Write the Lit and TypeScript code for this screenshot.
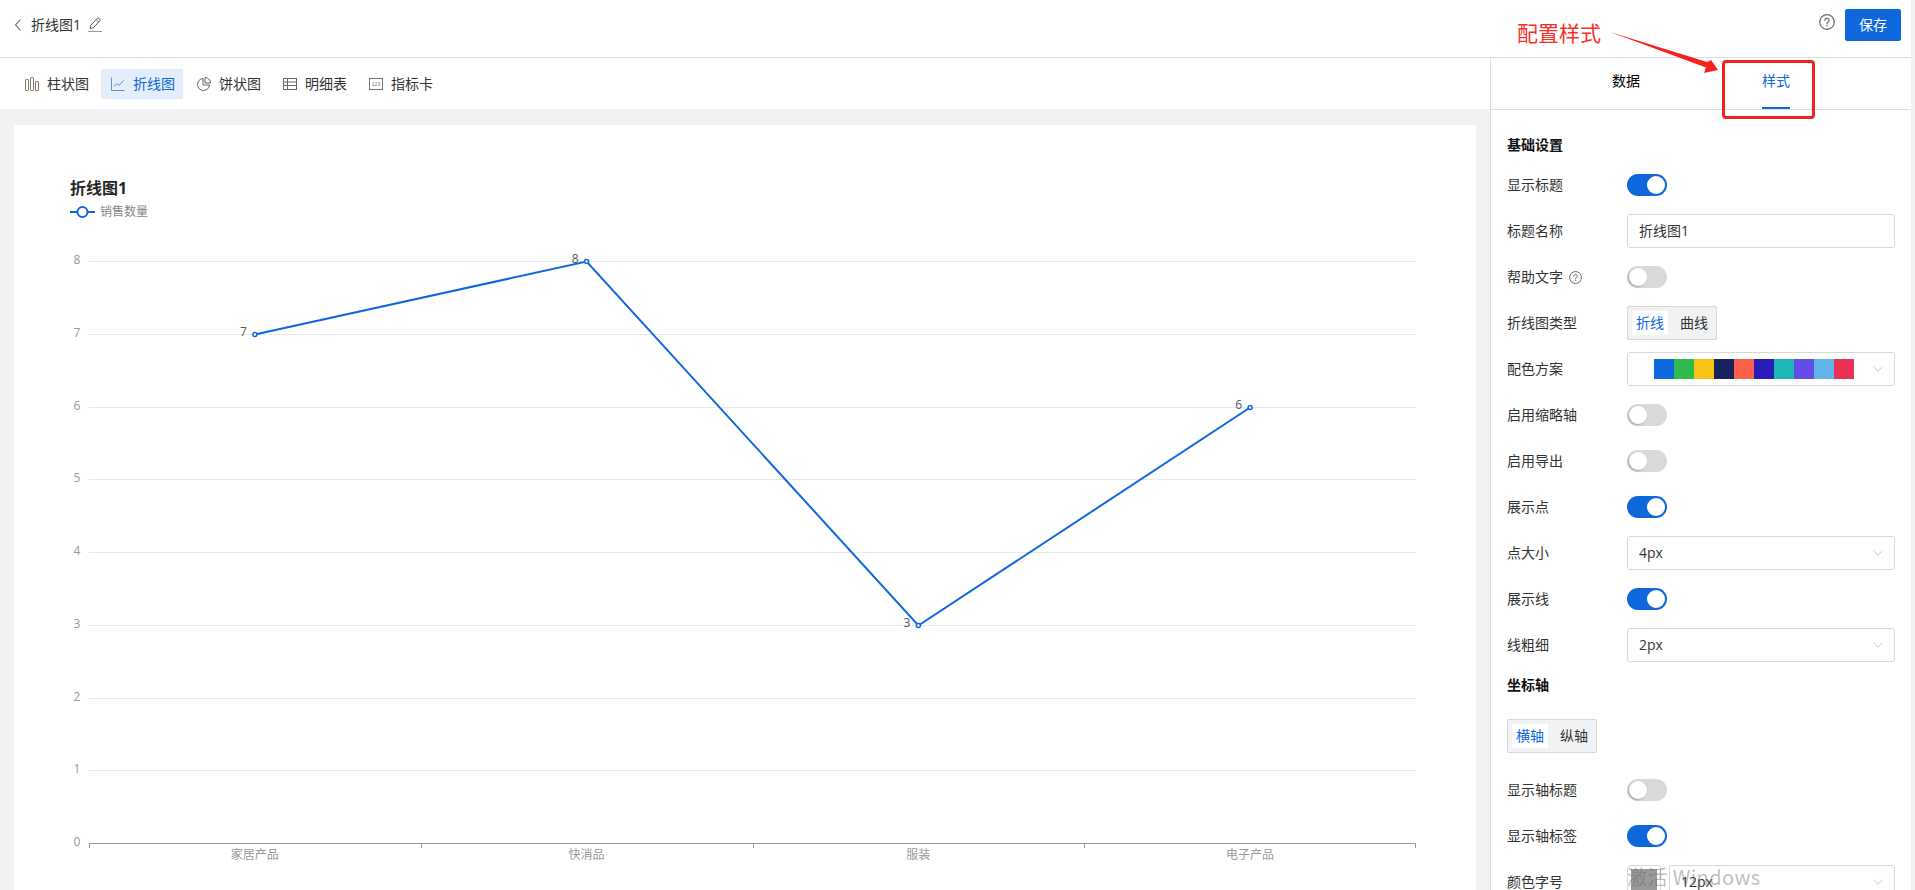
import { LitElement, html, css, svg } from "lit";
import { customElement } from "lit/decorators.js";

const BLUE = "#0f67dc";
const helpIcon = (s: number) => html`<svg width=${s} height=${s} viewBox="0 0 16 16" fill="none" stroke="#666" stroke-width="1.2"><circle cx="8" cy="8" r="7.3"/><path d="M5.9 6.3a2.1 2.1 0 1 1 3.3 1.7c-.8.5-1.2.9-1.2 1.8" stroke-linecap="round"/><circle cx="8" cy="11.8" r=".45" fill="#666" stroke-width=".6"/></svg>`;
const chev = html`<svg class="chev" width="10" height="6" viewBox="0 0 10 6" fill="none" stroke="#ccc" stroke-width="1"><path d="M.5.5 5 5.2 9.5.5"/></svg>`;

const tools: { label: string; active?: boolean; icon: unknown }[] = [
  { label: "柱状图", icon: html`<svg width="14" height="14" viewBox="0 0 14 14" fill="none" stroke="#857a66" stroke-width="1"><rect x=".5" y="2.5" width="3" height="11" rx=".6"/><rect x="5.5" y=".5" width="3" height="13" rx=".6"/><rect x="10.5" y="4.5" width="3" height="9" rx=".6"/></svg>` },
  { label: "折线图", active: true, icon: html`<svg width="14" height="14" viewBox="0 0 14 14" fill="none" stroke="#5f8ee0" stroke-width="1"><path d="M.5.5v13h13"/><path d="M3 9.5l3-3 2 2 4.500-5"/></svg>` },
  { label: "饼状图", icon: html`<svg width="14" height="14" viewBox="0 0 14 14" fill="none" stroke="#666" stroke-width="1"><path d="M6 1.500a6 6 0 1 0 6.500 6.500H6z"/><path d="M8 .5a5.500 5.500 0 0 1 5.500 5.500H8z"/></svg>` },
  { label: "明细表", icon: html`<svg width="14" height="14" viewBox="0 0 14 14" fill="none" stroke="#6e6a60" stroke-width="1"><rect x=".5" y="1.500" width="13" height="11"/><path d="M.5 5h13M.5 8.500h13M4.500 1.500v11"/></svg>` },
  { label: "指标卡", icon: html`<svg width="14" height="14" viewBox="0 0 14 14" fill="none" stroke="#777" stroke-width="1"><rect x=".5" y="1.500" width="13" height="11"/><text x="7" y="9" font-size="5" text-anchor="middle" fill="#777" stroke="none" font-family="Liberation Sans">123</text></svg>` },
];

const points = [
  { name: "家居产品", v: 7 },
  { name: "快消品", v: 8 },
  { name: "服装", v: 3 },
  { name: "电子产品", v: 6 },
];
const palette = ["#0e68dd", "#2fba4e", "#f8c315", "#18235e", "#fb604b", "#2a1cb8", "#1fb6b6", "#644ce8", "#62b5e8", "#ec3157"];

@customElement("app-root")
export class AppRoot extends LitElement {
  static styles = css`
    :host {
      --blue: #0f67dc;
      display: block;
      position: relative;
      width: 1915px;
      height: 890px;
      overflow: hidden;
      background: #fff;
      font-family: "Open Sans", "Noto Sans CJK SC", sans-serif;
      font-size: 14px;
      line-height: 22px;
      color: #333;
    }
    .shell { display: flex; height: 890px; }
    .page { width: 1911px; display: flex; flex-direction: column; }
    .scroll { width: 4px; background: #f1f1f1; }
    header {
      box-sizing: content-box;
      height: 49px;
      border-bottom: 1px solid #dcdcdc;
      display: flex;
      align-items: center;
      padding: 0 10px 8px 15px;
    }
    .back { margin-right: 10px; display: block; }
    .pencil { margin-left: 7px; display: block; }
    .spacer { flex: 1; }
    .help { display: block; margin-right: 10px; }
    .save {
      width: 56px;
      height: 32px;
      border: 0;
      border-radius: 2px;
      background: var(--blue);
      color: #fff;
      font: inherit;
    }
    .body { flex: 1; display: flex; min-height: 0; }
    .left { width: 1490px; display: flex; flex-direction: column; }
    .toolbar { height: 51px; display: flex; align-items: center; gap: 4px; padding-left: 15px; }
    .tool { height: 30px; display: flex; align-items: center; gap: 8px; padding: 0 8px 0 10px; }
    .tool svg { display: block; }
    .tool.active { background: #e4eefb; color: var(--blue); }
    .canvas { flex: 1; background: #f1f2f4; padding: 16px 14px 0; min-height: 0; }
    .card { height: 100%; background: #fff; display: flex; flex-direction: column; overflow: hidden; }
    .chart-head { padding: 51px 56px 0; height: 49px; }
    .chart-title { font-size: 16px; font-weight: 700; line-height: 24px; color: #262626; }
    .legend { display: flex; align-items: center; gap: 5px; font-size: 12px; line-height: 16px; color: #888; margin-top: 4px; }
    .legend svg { display: block; }
    .chart { display: block; }
    .chart text { font-family: "Open Sans", "Noto Sans CJK SC", sans-serif; font-size: 12px; }
    aside { width: 420px; border-left: 1px solid #dcdcdc; display: flex; flex-direction: column; min-height: 0; overflow: hidden; }
    .tabs { height: 51px; border-bottom: 1px solid #dcdcdc; box-sizing: content-box; display: flex; justify-content: center; flex: none; }
    .tab { width: 150px; display: flex; justify-content: center; align-items: center; position: relative; color: #000; padding-bottom: 5px; box-sizing: border-box; }
    .tab.on { color: var(--blue); }
    .tab.on::after { content: ""; position: absolute; bottom: 0; left: 61px; width: 28px; height: 2px; background: var(--blue); }
    .form { padding: 24px 16px 0; }
    .section { font-weight: 700; color: #111; height: 22px; margin-bottom: 12px; }
    .section.flush { margin: 0; }
    .row { display: flex; align-items: center; height: 34px; margin-bottom: 12px; }
    .label { width: 120px; display: flex; align-items: center; gap: 6px; flex: none; }
    .label svg { display: block; }
    .switch { width: 40px; height: 22px; border-radius: 11px; background: #d9d9d9; position: relative; }
    .switch::after { content: ""; position: absolute; top: 2px; left: 2px; width: 18px; height: 18px; border-radius: 50%; background: #fff; box-shadow: -1px 1px 2px rgba(0,0,0,.25); }
    .switch.on { background: var(--blue); }
    .switch.on::after { left: 20px; box-shadow: none; }
    .field {
      flex: 1;
      height: 34px;
      box-sizing: border-box;
      border: 1px solid #d9d9d9;
      border-radius: 3px;
      display: flex;
      align-items: center;
      padding: 0 11px;
      background: #fff;
    }
    .chev { margin-left: auto; display: block; flex: none; }
    .swatches { display: flex; margin-left: 15px; }
    .swatches i { width: 20px; height: 20px; display: block; }
    .seg {
      height: 34px;
      box-sizing: border-box;
      border: 1px solid #d9d9d9;
      border-radius: 2px;
      background: #f1f2f4;
      display: inline-flex;
      gap: 8px;
      padding: 4px;
      align-items: stretch;
    }
    .seg span { padding: 0 4px; display: flex; align-items: center; }
    .seg .on { background: #fff; color: var(--blue); }
    .seg-row { margin: 23px 0 20px; height: 34px; }
    .colorbox { width: 34px; height: 34px; box-sizing: border-box; border: 1px solid #d9d9d9; border-radius: 3px; padding: 3px; margin-right: 8px; flex: none; }
    .colorbox i { display: block; height: 100%; background: #999; }
    .note { position: absolute; left: 1517px; top: 17px; font-size: 21px; line-height: 32px; color: #f5302a; white-space: nowrap; }
    .mark { position: absolute; left: 0; top: 0; pointer-events: none; }
    .box { position: absolute; left: 1722px; top: 60px; width: 93px; height: 59px; box-sizing: border-box; border: 3px solid #f5221c; border-radius: 4px; }
    .wm { position: absolute; left: 1627px; top: 863px; font-size: 20px; line-height: 28px; color: rgba(110,110,110,.45); white-space: nowrap; font-family: "Noto Sans CJK SC", "Open Sans", sans-serif; letter-spacing: .4px; }
  `;

  private sw(on: boolean) {
    return html`<div class="switch ${on ? "on" : ""}"></div>`;
  }

  private swRow(label: string, on: boolean) {
    return html`<div class="row"><div class="label">${label}</div>${this.sw(on)}</div>`;
  }

  private selRow(label: string, value: string) {
    return html`<div class="row"><div class="label">${label}</div><div class="field">${value}${chev}</div></div>`;
  }

  private chart() {
    const x0 = 75, x1 = 1402, y8 = 36, y0 = 618;
    const band = (x1 - x0) / 4;
    const yOf = (v: number) => y0 - ((y0 - y8) / 8) * v;
    const crisp = (v: number) => Math.round(yOf(v)) + 0.5;
    const px = (i: number) => x0 + band * (i + 0.5);
    const line = points.map((p, i) => `${px(i).toFixed(1)},${crisp(p.v)}`).join(" ");
    return html`<svg class="chart" width="1462" height="665" viewBox="0 0 1462 665">
      ${[8, 7, 6, 5, 4, 3, 2, 1].map((v) => svg`<line x1="75" x2="1402" y1=${crisp(v)} y2=${crisp(v)} stroke="#e3e8f0"/>
        <text x="63" y=${yOf(v)} text-anchor="middle" dominant-baseline="middle" fill="#999">${v}</text>`)}
      <text x="63" y=${y0} text-anchor="middle" dominant-baseline="middle" fill="#999">0</text>
      <path d="M75.500 623V${y0 + 0.5}H1401.500V623" fill="none" stroke="#999"/>
      ${[1, 2, 3].map((i) => svg`<line x1=${Math.round(x0 + band * i) + 0.5} x2=${Math.round(x0 + band * i) + 0.5} y1=${y0} y2="623" stroke="#999"/>`)}
      ${points.map((p, i) => svg`<text x=${px(i)} y=${y0 + 13} text-anchor="middle" dominant-baseline="middle" fill="#999">${p.name}</text>`)}
      <polyline points=${line} fill="none" stroke=${BLUE} stroke-width="2"/>
      ${points.map((p, i) => svg`<circle cx=${px(i)} cy=${crisp(p.v)} r="2" fill="#fff" stroke=${BLUE} stroke-width="1.500"/>
        <text x=${px(i) - 8} y=${yOf(p.v) - 1} text-anchor="end" dominant-baseline="middle" fill="#555">${p.v}</text>`)}
    </svg>`;
  }

  render() {
    return html`
      <div class="shell">
        <div class="page">
          <header>
            <svg class="back" width="6" height="12" viewBox="0 0 6 12" fill="none" stroke="#666" stroke-width="1.100"><path d="M5.500.5 .6 6l4.900 5.500"/></svg>
            <span>折线图1</span>
            <svg class="pencil" width="14" height="16" viewBox="0 0 14 16" fill="none" stroke="#555" stroke-width="1"><path d="M2.300 11.500 2.800 8.300 9.300 1.300a1.200 1.200 0 0 1 1.700 0l.8.8a1.200 1.200 0 0 1 0 1.700L5.400 10.800z"/><path d="M8.300 2.500l2.500 2.500"/><path d="M0 14.500h14" stroke="#999"/></svg>
            <div class="spacer"></div>
            <span class="help">${helpIcon(16)}</span>
            <button class="save">保存</button>
          </header>
          <div class="body">
            <div class="left">
              <div class="toolbar">
                ${tools.map((t) => html`<div class="tool ${t.active ? "active" : ""}">${t.icon}<span>${t.label}</span></div>`)}
              </div>
              <div class="canvas">
                <div class="card">
                  <div class="chart-head">
                    <div class="chart-title">折线图1</div>
                    <div class="legend">
                      <svg width="25" height="14" viewBox="0 0 25 14" fill="none" stroke=${BLUE} stroke-width="2"><path d="M0 7h25"/><circle cx="12.500" cy="7" r="5" fill="#fff"/></svg>
                      <span>销售数量</span>
                    </div>
                  </div>
                  ${this.chart()}
                </div>
              </div>
            </div>
            <aside>
              <div class="tabs">
                <div class="tab">数据</div>
                <div class="tab on">样式</div>
              </div>
              <div class="form">
                <div class="section">基础设置</div>
                ${this.swRow("显示标题", true)}
                <div class="row"><div class="label">标题名称</div><div class="field">折线图1</div></div>
                <div class="row"><div class="label">帮助文字 ${helpIcon(13)}</div>${this.sw(false)}</div>
                <div class="row"><div class="label">折线图类型</div><div class="seg"><span class="on">折线</span><span>曲线</span></div></div>
                <div class="row"><div class="label">配色方案</div><div class="field"><div class="swatches">${palette.map((c) => html`<i style="background:${c}"></i>`)}</div>${chev}</div></div>
                ${this.swRow("启用缩略轴", false)}
                ${this.swRow("启用导出", false)}
                ${this.swRow("展示点", true)}
                ${this.selRow("点大小", "4px")}
                ${this.swRow("展示线", true)}
                ${this.selRow("线粗细", "2px")}
                <div class="section flush">坐标轴</div>
                <div class="seg-row"><div class="seg"><span class="on">横轴</span><span>纵轴</span></div></div>
                ${this.swRow("显示轴标题", false)}
                ${this.swRow("显示轴标签", true)}
                <div class="row"><div class="label">颜色字号</div><div class="colorbox"><i></i></div><div class="field">12px${chev}</div></div>
              </div>
            </aside>
          </div>
        </div>
        <div class="scroll"></div>
      </div>
      <div class="note">配置样式</div>
      <svg class="mark" width="1915" height="890" viewBox="0 0 1915 890"><polygon points="1610,32 1707,62 1711,60 1718,70 1704,73 1706,67.500" fill="#f5221c"/></svg>
      <div class="box"></div>
      <div class="wm">激活 Windows</div>
    `;
  }
}
